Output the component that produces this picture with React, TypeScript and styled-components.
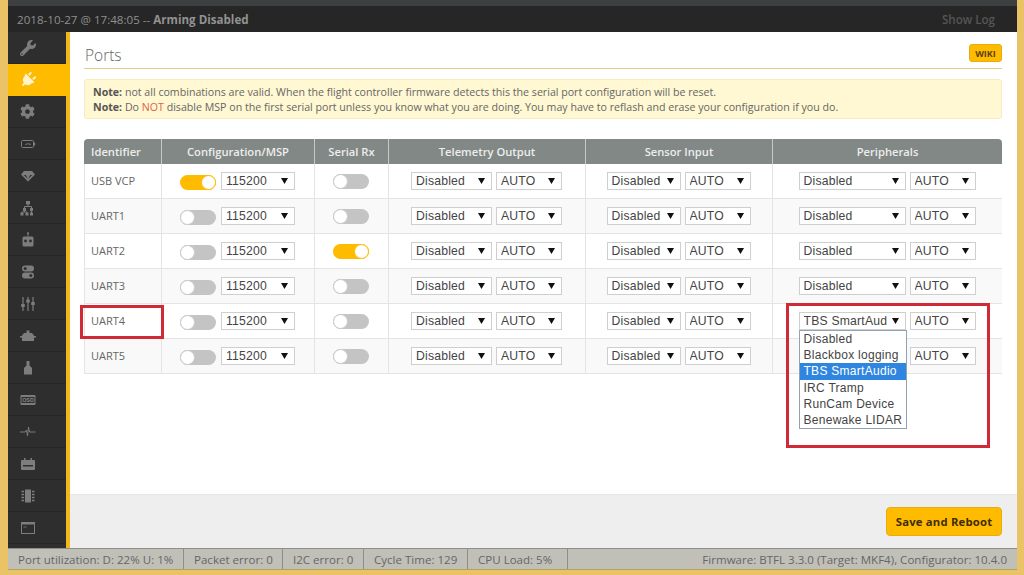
import React from 'react';
import styled, { createGlobalStyle } from 'styled-components';
import { FaWrench, FaPlug, FaCog } from 'react-icons/fa';

const Global = createGlobalStyle`
  html, body { margin: 0; padding: 0; width: 1024px; height: 575px; overflow: hidden; }
  body { font-family: "Open Sans", "Liberation Sans", sans-serif; }
`;

const Frame = styled.div`
  width: 1024px; height: 575px; box-sizing: border-box;
  background: #e9c365;
  padding: 0 7px 5px 8px;
  display: flex; flex-direction: column;
`;
const TopStrip = styled.div`height: 6px; background: #3c4040; flex: none;`;
const Header = styled.header`
  height: 26px; flex: none; background: #262626;
  display: flex; align-items: center; justify-content: space-between;
  padding: 0 22px 0 9px;
  font-size: 11.6px; color: #8f8f8f;
`;
const Strong = styled.strong`font-weight: 700; color: #929292;`;
const ShowLog = styled.span`color: #555; font-weight: 600; font-size: 11.6px;`;
const Body = styled.div`flex: 1; display: flex; min-height: 0;`;
const Sidebar = styled.nav`
  width: 58px; flex: none; background: #2e2e2e; border-right: 4px solid #f2b71f;
  display: flex; flex-direction: column;
`;
const NavItem = styled.div<{ $active?: boolean }>`
  height: 32px; flex: none; box-sizing: border-box;
  display: flex; align-items: center; padding-left: 12px;
  color: ${p => (p.$active ? '#fff3cf' : '#7d7d7d')};
  background: ${p => (p.$active ? '#ffbb00' : 'transparent')};
  border-bottom: 1px solid ${p => (p.$active ? '#ffbb00' : '#272727')};
  margin-right: ${p => (p.$active ? '-4px' : '0')};
  font-size: 15px;
`;
const Content = styled.main`flex: 1; min-width: 0; display: flex; flex-direction: column; background: #fff;`;
const Tab = styled.section`flex: 1; padding: 0 15px 0 14px; display: flex; flex-direction: column;`;
const TitleRow = styled.div`
  height: 37px; flex: none; box-sizing: border-box;
  border-bottom: 1px solid #dccf86;
  display: flex; align-items: center; justify-content: space-between;
  padding-top: 12px; padding-bottom: 3px;
`;
const Title = styled.h1`margin: 0 0 0 1px; font-size: 15.5px; font-weight: 300; color: #666;`;
const Wiki = styled.span`
  width: 33px; height: 18px; box-sizing: border-box; border-radius: 3px; background: #ffbb00;
  border: 1px solid #e8ac10; display: flex; align-items: center; justify-content: center;
  font-size: 9px; font-weight: 700; color: #5c4210; margin-top: -3px;
`;
const NoteBox = styled.div`
  margin-top: 10px; height: 40px; flex: none; box-sizing: border-box;
  background: #fff8d2; border: 1px solid #f5ecc0; border-radius: 3px;
  padding: 5px 8px; font-size: 10.63px; line-height: 15px; color: #666; white-space: nowrap;
`;
const NoteLabel = styled.b`font-weight: 700; color: #555;`;
const Not = styled.span`color: #e2604a;`;
const Table = styled.div`
  margin-top: 20px; display: flex; flex-direction: column; flex: none;
`;
const cols = '77px 153px 74px 197px 187px 230px';
const HeadRow = styled.div`
  display: grid; grid-template-columns: ${cols}; height: 25px;
  background: #828885; border-radius: 4px 4px 0 0;
`;
const HeadCell = styled.div<{ $left?: boolean }>`
  display: flex; align-items: center; justify-content: ${p => (p.$left ? 'flex-start' : 'center')};
  padding-left: ${p => (p.$left ? '7px' : '0')};
  font-size: 11.2px; font-weight: 600; color: #eceeed;
  border-left: 1px solid #c6c9c7;
  &:first-child { border-left: none; }
`;
const Row = styled.div<{ $alt?: boolean }>`
  display: grid; grid-template-columns: ${cols}; height: 35px; box-sizing: border-box;
  background: ${p => (p.$alt ? '#f9f9f9' : '#fff')};
  border-bottom: 1px solid #e4e4e4;
`;
const Cell = styled.div`
  position: relative;
  display: flex; align-items: center; justify-content: center; gap: 4px;
  border-left: 1px solid #e4e4e4; padding-right: 1px;
`;
const IdCell = styled(Cell)`
  justify-content: flex-start; padding: 0 0 1px 6px; font-size: 11px; color: #666;
`;
const Toggle = styled.span<{ $on?: boolean; $drop?: boolean }>`
  position: relative; display: block; flex: none; width: 36px; height: 15px; border-radius: 8px;
  background: ${p => (p.$on ? '#ffbb00' : '#c4c4c4')};
  margin: ${p => (p.$drop ? '3px 1px 0 0' : '1px 0 0 0')};
  &::after {
    content: ''; position: absolute; top: 0; ${p => (p.$on ? 'right: 0;' : 'left: 0;')}
    width: 15px; height: 15px; box-sizing: border-box; border-radius: 50%;
    background: #fff; border: 1px solid ${p => (p.$on ? '#ffbb00' : '#c9c9c9')};
  }
`;
const Select = styled.div<{ $w: number }>`
  position: relative; flex: none; width: ${p => p.$w}px; height: 18px; box-sizing: border-box;
  border: 1px solid #cfcfcf; background: #fff; padding: 0 18px 0 4px;
  font: 12.2px/16px "Liberation Sans", Arial, sans-serif; letter-spacing: .2px; color: #444;
  white-space: nowrap;
`;
const SelectText = styled.span`display: block; overflow: hidden;`;
const Arrow = styled.svg`position: absolute; right: 6px; top: 5px; width: 7px; height: 6px;`;
const Dropdown = styled.ul`
  position: absolute; left: 0; top: 18px; z-index: 3; margin: 0; padding: 0; list-style: none;
  width: 108px; box-sizing: border-box; background: #fff; border: 1px solid #8fa3b5;
  font: 12px/16.2px "Liberation Sans", Arial, sans-serif; letter-spacing: .28px; color: #444;
`;
const Option = styled.li<{ $sel?: boolean }>`
  padding-left: 4px; white-space: nowrap; height: 16.2px;
  background: ${p => (p.$sel ? '#2f86e0' : 'transparent')};
  color: ${p => (p.$sel ? '#fff' : '#444')};
`;
const SelectAnchor = styled.div`position: relative; flex: none; display: flex;`;
const IdMark = styled.div`
  position: absolute; left: -5px; top: 1px; width: 84px; height: 34px; box-sizing: border-box;
  border: 3px solid #cf2a35; pointer-events: none; z-index: 2;
`;
const PeripheralMark = styled.div`
  position: absolute; left: 13px; top: -1px; width: 204px; height: 145px; box-sizing: border-box;
  border: 3px solid #cf2a35; pointer-events: none; z-index: 4;
`;
const Spacer = styled.div`flex: 1;`;
const Footer = styled.footer`
  height: 54px; flex: none; box-sizing: border-box; background: #eeeeee;
  border-top: 1px solid #e6e6e6;
  display: flex; align-items: center; justify-content: flex-end; padding: 0 15px 0 0;
`;
const Save = styled.button`
  width: 116px; height: 29px; border-radius: 4px; border: 1px solid #e8ac10; background: #ffbb00;
  font: 700 11.3px "Open Sans", sans-serif; color: #3f2c05; padding: 0; letter-spacing: .2px;
`;
const Status = styled.footer`
  height: 22px; flex: none; box-sizing: border-box; background: #c0c0b8;
  border-top: 1px solid #8e8e88; border-bottom: 1px solid #b0a25c;
  display: flex; align-items: center; font-size: 11.55px; color: #666;
`;
const Stat = styled.span<{ $w: number }>`
  width: ${p => p.$w}px; box-sizing: border-box; padding-left: 10px; height: 100%;
  display: flex; align-items: center; border-right: 1px solid #8e8e88; white-space: nowrap;
`;
const Version = styled.span`margin-left: auto; padding-right: 10px; white-space: nowrap;`;
const OsdLabel = styled.text`font: 700 5.4px "Liberation Sans", sans-serif; fill: #8a8a8a;`;

const Ico: React.FC<{ children: React.ReactNode }> = ({ children }) => (
  <svg width={16} height={16} viewBox="0 0 16 16" fill="currentColor">{children}</svg>
);

const icons: React.ReactNode[] = [
  <FaWrench key="w" size={16} />,
  <FaPlug key="p" size={16} style={{ transform: 'rotate(45deg)' }} />,
  <FaCog key="c" size={15} />,
  <Ico key="b"><rect x="1.500" y="4.500" width="12" height="7" rx="1" fill="none" stroke="currentColor" /><rect x="14" y="6.500" width="1.200" height="3" /><path d="M5 8.500l4-1v1l2-.5" fill="none" stroke="currentColor" strokeWidth=".8" /></Ico>,
  <Ico key="para"><path d="M1 6.500 4 3h8l3 3.500L8 13.500z" /><path d="M3.800 7h2L8 11zM12.200 7h-2L8 11z" fill="#2e2e2e" /></Ico>,
  <Ico key="s"><rect x="6" y="1" width="4" height="3.500" /><path d="M8 4.500v2M4.500 8.500V6.500h7v2M4.500 11v1M2 14v-2h5v2M11.500 11v3" fill="none" stroke="currentColor" /><rect x="3" y="8" width="3" height="3" /><rect x="10" y="8" width="3" height="3" /><rect x="0.500" y="12.500" width="3" height="3" /><rect x="5.500" y="12.500" width="3" height="3" /><rect x="10" y="12.500" width="3" height="3" /></Ico>,
  <Ico key="r"><rect x="7.500" y="0.500" width="1" height="4" /><circle cx="8" cy="1.200" r="1" /><rect x="2.500" y="4.500" width="11" height="10" rx="1.500" /><circle cx="5.500" cy="9" r="1.400" fill="#2e2e2e" /><circle cx="10.500" cy="9" r="1.400" fill="#2e2e2e" /></Ico>,
  <Ico key="t"><rect x="2" y="1.500" width="12" height="6" rx="3" /><circle cx="5.200" cy="4.500" r="1.500" fill="#2e2e2e" /><rect x="2" y="8.500" width="12" height="6" rx="3" /><circle cx="10.800" cy="11.500" r="1.500" fill="#2e2e2e" /></Ico>,
  <Ico key="sl"><path d="M3 1v14M8 1v14M13 1v14" stroke="currentColor" strokeWidth="1.200" /><rect x="1.200" y="8" width="3.600" height="3" rx=".5" /><rect x="6.200" y="3.500" width="3.600" height="3" rx=".5" /><rect x="11.200" y="6" width="3.600" height="3" rx=".5" /></Ico>,
  <Ico key="m"><path d="M4 5h8l2 2.500v5.500H2V7.500z" /><rect x="6.500" y="2.500" width="3" height="3" /><rect x="0" y="8" width="2.500" height="1.500" /><rect x="13.500" y="8" width="2.500" height="1.500" /></Ico>,
  <Ico key="l"><rect x="6.500" y="1" width="3" height="5" /><path d="M6 6h4l2 2v6.500H4V8z" /></Ico>,
  <Ico key="o"><rect x="0.500" y="3" width="15" height="10" rx="1" /><rect x="1.500" y="5" width="13" height="6" fill="#2e2e2e" /><OsdLabel x="8" y="10" textAnchor="middle">OSD</OsdLabel></Ico>,
  <Ico key="wv"><path d="M0 8h5l1.500-2 1 6 1-9 1 5h6" fill="none" stroke="currentColor" strokeWidth="1" /></Ico>,
  <Ico key="k"><rect x="1" y="4" width="14" height="10" rx="1" /><rect x="4" y="2" width="1.500" height="2.500" /><rect x="10.500" y="2" width="1.500" height="2.500" /><rect x="3" y="9" width="10" height="1.500" fill="#2e2e2e" /></Ico>,
  <Ico key="ch"><rect x="5" y="1.500" width="6" height="13" /><path d="M1.500 3.500h2.500M1.500 6.500h2.500M1.500 9.500h2.500M1.500 12.500h2.500M12 3.500h2.500M12 6.500h2.500M12 9.500h2.500M12 12.500h2.500" stroke="currentColor" strokeWidth="1.500" /></Ico>,
  <Ico key="cl"><rect x="1.500" y="2.500" width="13" height="11" fill="none" stroke="currentColor" /><rect x="1.500" y="2.500" width="13" height="2" /><path d="M3.500 7h3" stroke="currentColor" strokeWidth=".8" /></Ico>,
];

const Sel: React.FC<{ w: number; v: string }> = ({ w, v }) => (
  <Select $w={w}>
    <SelectText>{v}</SelectText>
    <Arrow viewBox="0 0 7 6"><path d="M0 0h7L3.500 6z" fill="#111" /></Arrow>
  </Select>
);

const ports = [
  { id: 'USB VCP', msp: true, rx: false },
  { id: 'UART1', msp: false, rx: false },
  { id: 'UART2', msp: false, rx: true },
  { id: 'UART3', msp: false, rx: false },
  { id: 'UART4', msp: false, rx: false },
  { id: 'UART5', msp: false, rx: false },
];
const opts = ['Disabled', 'Blackbox logging', 'TBS SmartAudio', 'IRC Tramp', 'RunCam Device', 'Benewake LIDAR'];

export default function App() {
  return (
    <Frame>
      <Global />
      <TopStrip />
      <Header>
        <span>2018-10-27 @ 17:48:05 -- <Strong>Arming Disabled</Strong></span>
        <ShowLog>Show Log</ShowLog>
      </Header>
      <Body>
        <Sidebar>
          {icons.map((ic, i) => <NavItem key={i} $active={i === 1}>{ic}</NavItem>)}
        </Sidebar>
        <Content>
          <Tab>
            <TitleRow><Title>Ports</Title><Wiki>WIKI</Wiki></TitleRow>
            <NoteBox>
              <NoteLabel>Note:</NoteLabel> not all combinations are valid. When the flight controller firmware detects this the serial port configuration will be reset.<br />
              <NoteLabel>Note:</NoteLabel> Do <Not>NOT</Not> disable MSP on the first serial port unless you know what you are doing. You may have to reflash and erase your configuration if you do.
            </NoteBox>
            <Table>
              <HeadRow>
                <HeadCell $left>Identifier</HeadCell>
                <HeadCell>Configuration/MSP</HeadCell>
                <HeadCell>Serial Rx</HeadCell>
                <HeadCell>Telemetry Output</HeadCell>
                <HeadCell>Sensor Input</HeadCell>
                <HeadCell>Peripherals</HeadCell>
              </HeadRow>
              {ports.map((p, i) => (
                <Row key={p.id} $alt={i % 2 === 1}>
                  <IdCell>{p.id}{i === 4 && <IdMark />}</IdCell>
                  <Cell><Toggle $on={p.msp} $drop /><Sel w={74} v="115200" /></Cell>
                  <Cell><Toggle $on={p.rx} /></Cell>
                  <Cell><Sel w={81} v="Disabled" /><Sel w={66} v="AUTO" /></Cell>
                  <Cell><Sel w={74} v="Disabled" /><Sel w={66} v="AUTO" /></Cell>
                  <Cell>
                    {i === 4 && <PeripheralMark />}
                    <SelectAnchor>
                      <Sel w={107} v={i === 4 ? 'TBS SmartAudio' : 'Disabled'} />
                      {i === 4 && (
                        <Dropdown>
                          {opts.map(o => <Option key={o} $sel={o === 'TBS SmartAudio'}>{o}</Option>)}
                        </Dropdown>
                      )}
                    </SelectAnchor>
                    <Sel w={66} v="AUTO" />
                  </Cell>
                </Row>
              ))}
            </Table>
            <Spacer />
          </Tab>
          <Footer><Save>Save and Reboot</Save></Footer>
        </Content>
      </Body>
      <Status>
        <Stat $w={176}>Port utilization: D: 22% U: 1%</Stat>
        <Stat $w={99}>Packet error: 0</Stat>
        <Stat $w={81}>I2C error: 0</Stat>
        <Stat $w={104}>Cycle Time: 129</Stat>
        <Stat $w={100}>CPU Load: 5%</Stat>
        <Version>Firmware: BTFL 3.3.0 (Target: MKF4), Configurator: 10.4.0</Version>
      </Status>
    </Frame>
  );
}
